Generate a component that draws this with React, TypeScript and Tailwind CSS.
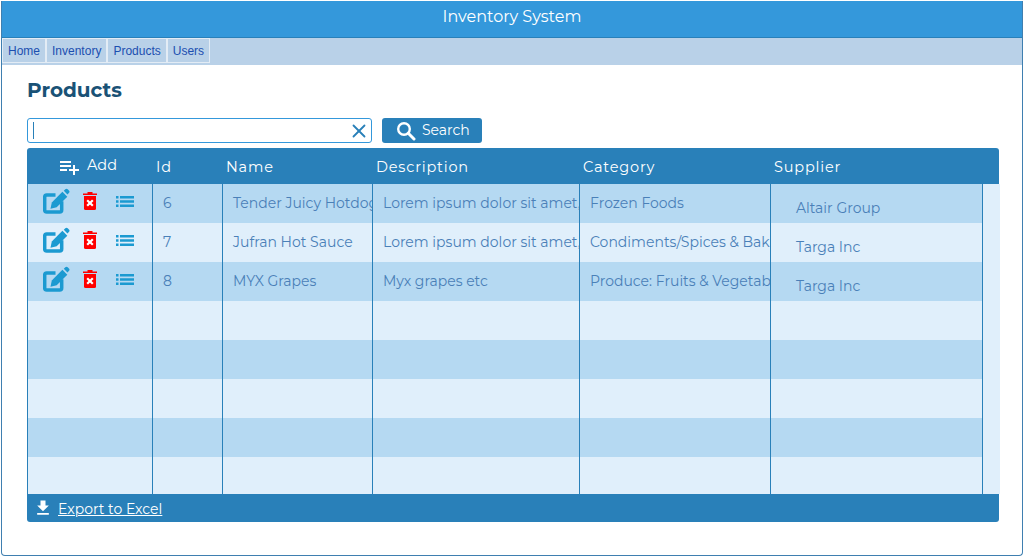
import React from 'react';
import { X } from 'lucide-react';
import { MdFileDownload, MdPlaylistAdd } from 'react-icons/md';

const font = "font-['Montserrat','Inter','Open_Sans',sans-serif]";
const columns = 'grid grid-cols-[125px_70px_150px_207px_191px_212px_17px]';

const products = [
  { id: '6', name: 'Tender Juicy Hotdog', description: 'Lorem ipsum dolor sit amet, consectetur', category: 'Frozen Foods', supplier: 'Altair Group' },
  { id: '7', name: 'Jufran Hot Sauce', description: 'Lorem ipsum dolor sit amet, consectetur', category: 'Condiments/Spices & Baking', supplier: 'Targa Inc' },
  { id: '8', name: 'MYX Grapes', description: 'Myx grapes etc', category: 'Produce: Fruits & Vegetables', supplier: 'Targa Inc' },
];

const navItems = ['Home', 'Inventory', 'Products', 'Users'];

function EditIcon() {
  return (
    <svg viewBox="0 0 27 25.500" className="h-[26px] w-[27px] shrink-0 text-[#1b9ad1]" fill="currentColor">
      <path d="M12.500 6.700H3.700a2 2 0 0 0-2 2v13a2 2 0 0 0 2 2h13a2 2 0 0 0 2-2V13" fill="none" stroke="currentColor" strokeWidth="3.500" />
      <path d="M7.500 20.500l1.300-6.300L19.400 3.600l4.900 4.900L13.700 19.100z" />
      <path d="M20.800 2.600l1.500-1.500a1.700 1.700 0 0 1 2.400 0l1.200 1.200a1.700 1.700 0 0 1 0 2.400l-1.500 1.500z" />
    </svg>
  );
}

function TrashIcon() {
  return (
    <svg viewBox="0 0 14 18" className="ml-[13px] mt-[4px] h-[18px] w-[14px] shrink-0">
      <path d="M0 1.500h4.500V0h5v1.500H14V3H0z" fill="#ff0000" />
      <path d="M1 4h12v12.500a1.500 1.500 0 0 1-1.500 1.500h-9A1.500 1.500 0 0 1 1 16.500z" fill="#ff0000" />
      <path d="M4.200 8.200l5.600 5.600M9.800 8.200l-5.600 5.600" stroke="#fff" strokeWidth="2.200" />
    </svg>
  );
}

function ListIcon() {
  return (
    <svg viewBox="0 0 18 11" className="ml-[19px] mt-[8px] h-[11px] w-[18px] shrink-0 text-[#1b9ad1]" fill="currentColor">
      <path d="M0 0h2.500v2.500H0zM4 0h14v2.500H4zM0 4.200h2.500v2.500H0zM4 4.200h14v2.500H4zM0 8.400h2.500v2.500H0zM4 8.400h14v2.500H4z" />
    </svg>
  );
}

function SearchIcon() {
  return (
    <svg viewBox="0 0 20 20" className="h-[20px] w-[20px] shrink-0" fill="none" stroke="currentColor">
      <circle cx="8" cy="8" r="5.800" strokeWidth="2.400" />
      <path d="M12.300 12.300l5.700 5.700" strokeWidth="3" strokeLinecap="round" />
    </svg>
  );
}

function Cell({ children, className = 'pl-[10px] pt-[9px]' }: { children?: React.ReactNode; className?: string }) {
  return (
    <div className={`overflow-hidden whitespace-nowrap border-r border-[#2980b9] ${className}`}>
      {children}
    </div>
  );
}

export default function App() {
  const rows = Array.from({ length: 8 }, (_, i) => products[i] ?? null);

  return (
    <div className="h-[557px] w-[1024px] overflow-hidden bg-white p-px">
      <div className={`h-[555px] w-[1022px] rounded-b border border-t-0 border-[#3f7fb0] ${font}`}>
        <div className="flex h-[37px] items-center justify-center border-b border-[#2980b9] bg-[#3498db] pb-[5px] text-[16px] text-white">
          Inventory System
        </div>

        <nav className="flex h-[27px] items-start bg-[#b9d1e8] font-['Liberation_Sans',sans-serif] text-[12px] text-[#1c4fb0]">
          {navItems.map(item => (
            <a key={item} className="flex h-[25px] items-center border border-[#e3ecf5] px-[5px]">
              {item}
            </a>
          ))}
        </nav>

        <div className="pl-[25px] pr-[24px]">
          <h1 className="mt-[11px] text-[20px] font-bold leading-[28px] text-[#1a5276]">Products</h1>

          <div className="mt-[14px] flex gap-[10px]">
            <div className="flex h-[25px] w-[345px] items-center rounded-[3px] border border-[#3498db] pl-[5px] pr-px">
              <span className="h-[17px] w-px bg-[#2980b9]" />
              <X className="ml-auto h-[22px] w-[22px] text-[#2980b9]" strokeWidth={2} />
            </div>
            <button className="flex h-[25px] w-[100px] items-center gap-[6px] rounded-[3px] bg-[#2980b9] pl-[14px] text-[14px] text-white">
              <SearchIcon />
              Search
            </button>
          </div>

          <div className="mt-[5px] w-[972px]">
            <div className={`${columns} h-[36px] rounded-t-[3px] bg-[#2980b9] text-[14.5px] tracking-[0.8px] text-white`}>
              <div className="flex items-start gap-[6px] pl-[30px] pt-[5px]">
                <MdPlaylistAdd className="mt-[2px] h-[24px] w-[24px]" />
                <span className="mt-[2px] tracking-normal">Add</span>
              </div>
              <div className="pl-[4px] pt-[9px]">Id</div>
              <div className="pl-[4px] pt-[9px]">Name</div>
              <div className="pl-[4px] pt-[9px]">Description</div>
              <div className="pl-[4px] pt-[9px]">Category</div>
              <div className="pl-[4px] pt-[9px]">Supplier</div>
              <div />
            </div>

            <div className="border-x border-[#2980b9]">
              {rows.map((row, i) => (
                <div
                  key={i}
                  className={`${columns} -mr-px ${i === 7 ? 'h-[37px]' : 'h-[39px]'} text-[14px] text-[#4a80b8] ${i % 2 === 0 ? 'bg-[#b5d9f2]' : 'bg-[#e0effb]'}`}
                >
                  <div className="-ml-px flex items-start border-r border-[#2980b9] pl-[16px] pt-[4px]">
                    {row && (
                      <>
                        <EditIcon />
                        <TrashIcon />
                        <ListIcon />
                      </>
                    )}
                  </div>
                  <Cell>{row?.id}</Cell>
                  <Cell>{row?.name}</Cell>
                  <Cell>{row?.description}</Cell>
                  <Cell>{row?.category}</Cell>
                  <Cell className="pl-[25px] pt-[14px]">{row?.supplier}</Cell>
                  <div className="bg-[#e0effb]" />
                </div>
              ))}
            </div>

            <div className="flex h-[28px] items-center gap-[5px] rounded-b-[3px] bg-[#2980b9] pl-[6px] pt-[2px] text-[14px] text-white">
              <MdFileDownload className="-mt-[2px] h-[20px] w-[20px]" />
              <a className="underline">Export to Excel</a>
            </div>
          </div>
        </div>
      </div>
    </div>
  );
}
